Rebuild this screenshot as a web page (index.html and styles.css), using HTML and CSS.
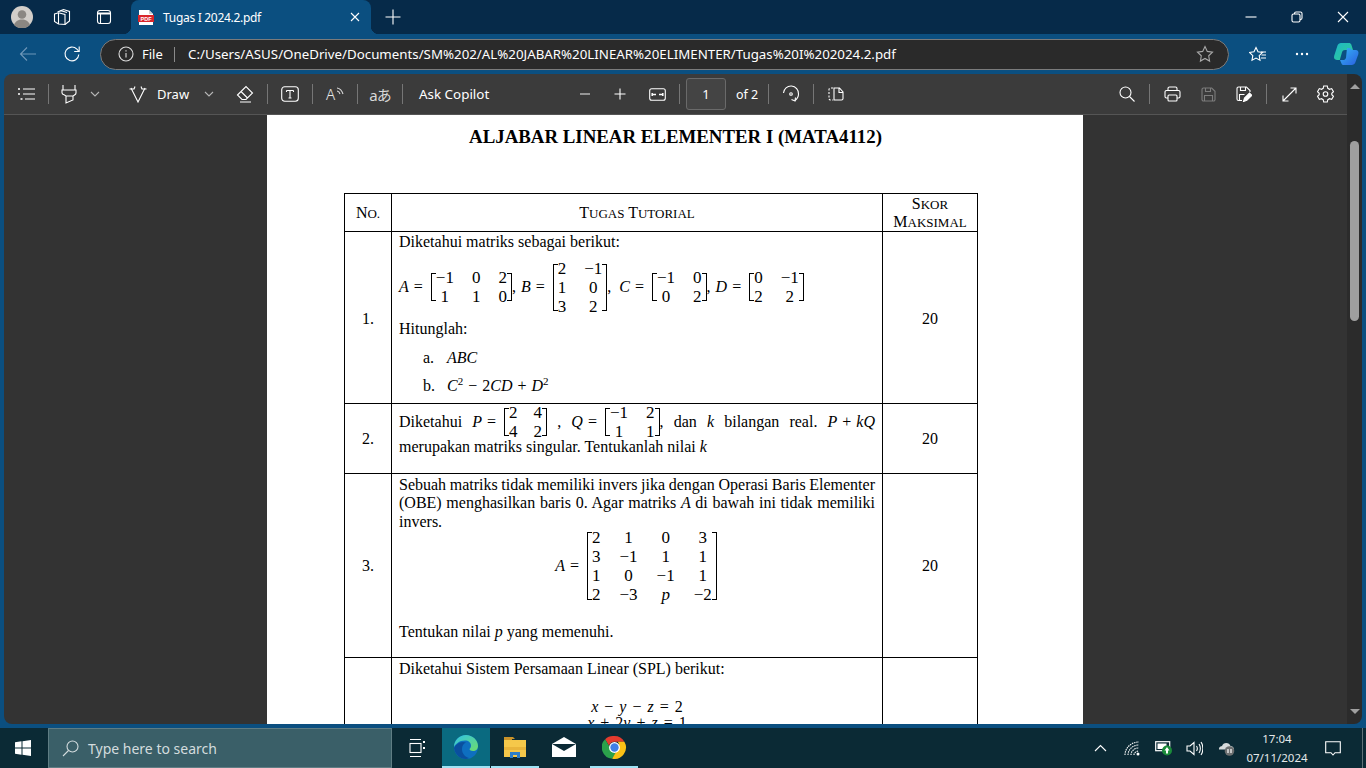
FILE: index.html
```html
<!DOCTYPE html>
<html lang="id">
<head>
  <meta charset="UTF-8" />
  <title>Tugas I 2024.2.pdf</title>
  <link rel="stylesheet" href="styles.css">
</head>
<body>

  <!-- title bar + tabs -->
  <div class="tabstrip">
    <div class="avatar">
      <svg width="22" height="22" viewBox="0 0 22 22"><circle cx="11" cy="11" r="11" fill="#d2cec9"/><circle cx="11" cy="8.500" r="4.300" fill="#8b8782"/><path d="M3 19c1.500-4 4.500-5.500 8-5.500s6.500 1.500 8 5.500a11 11 0 0 1-16 0z" fill="#8b8782"/></svg>
    </div>
    <div class="strip-btn w-workspaces">
      <svg class="ico" width="18" height="18" viewBox="0 0 18 18"><path d="M7.500 2.800 10.500 1.500 16.500 3.500v9.500l-4.500 3.500"/><path d="M4.500 4 8 2.700 14 4.600"/><path d="M1.500 6 5.500 4.800 12 6.500v10l-6.500-.5L1.500 13.500z"/><path d="M5.500 5v11"/></svg>
    </div>
    <div class="strip-btn w-tabactions">
      <svg class="ico" width="16" height="16" viewBox="0 0 16 16"><rect x="1.500" y="1.500" width="13" height="13" rx="2.500"/><path d="M1.500 4.500h13" stroke-width="2"/><path d="M4.500 4.500v10"/></svg>
    </div>
    <div class="tab">
      <svg class="pdf-fav" width="16" height="17" viewBox="0 0 16 17"><path d="M1 1h10l4 4v11H1z" fill="#fff"/><path d="M11 1v4h4z" fill="#cfcfcf"/><rect x="0" y="6" width="16" height="7" fill="#d9252a"/><text x="8" y="11.600" text-anchor="middle" class="pdf-fav-text">PDF</text></svg>
      <span class="tab-title">Tugas I 2024.2.pdf</span>
      <svg class="ico tab-close" width="10" height="10" viewBox="0 0 10 10"><path d="M1 1l8 8M9 1l-8 8"/></svg>
    </div>
    <div class="strip-btn w-newtab">
      <svg class="ico" width="16" height="16" viewBox="0 0 16 16"><path d="M8 .5v15M.5 8h15"/></svg>
    </div>
    <div class="winctl">
      <div class="winbtn"><svg class="ico" width="12" height="12" viewBox="0 0 12 12"><path d="M.5 6h11"/></svg></div>
      <div class="winbtn"><svg class="ico" width="12" height="12" viewBox="0 0 12 12"><rect x="1" y="3" width="8" height="8" rx="1.500"/><path d="M3.500 3V2.500A1.500 1.500 0 0 1 5 1h4.500A1.500 1.500 0 0 1 11 2.500V7a1.500 1.500 0 0 1-1.500 1.500H9"/></svg></div>
      <div class="winbtn"><svg class="ico" width="12" height="12" viewBox="0 0 12 12"><path d="M1 1l10 10M11 1L1 11"/></svg></div>
    </div>
  </div>

  <!-- address bar -->
  <div class="navbar">
    <div class="nav-btn back">
      <svg class="ico" width="18" height="16" viewBox="0 0 18 16"><path d="M17 8H1.500M8 1.500 1.500 8 8 14.500"/></svg>
    </div>
    <div class="nav-btn refresh">
      <svg class="ico" width="18" height="18" viewBox="0 0 18 18"><path d="M15.800 9.500a6.900 6.900 0 1 1-1.900-5.300L16 6.500"/><path d="M16.200 1.500v5h-5"/></svg>
    </div>
    <div class="urlbar">
      <svg class="ico info" width="16" height="16" viewBox="0 0 16 16"><circle cx="8" cy="8" r="7"/><path d="M8 7v4.500M8 4.200v1.200"/></svg>
      <span class="url-file">File</span>
      <span class="url-sep"></span>
      <span class="url-text">C:/Users/ASUS/OneDrive/Documents/SM%202/AL%20JABAR%20LINEAR%20ELIMENTER/Tugas%20I%202024.2.pdf</span>
      <svg class="ico star" width="18" height="18" viewBox="0 0 18 18"><path d="M9 1.500l2.300 4.900 5.200.7-3.800 3.700.9 5.300L9 13.500l-4.600 2.600.9-5.300L1.500 7.100l5.200-.7z"/></svg>
    </div>
    <div class="nav-btn favs">
      <svg class="ico" width="18" height="18" viewBox="0 0 18 18"><path d="M8 1.500l2 4.300 4.500.6-3.300 3.200.8 4.700-4-2.200-4 2.200.8-4.700L1.500 6.400 6 5.800z" transform="translate(-1 1)"/><path d="M12 7h5M12.500 10h4.500M12 13h5"/></svg>
    </div>
    <div class="nav-btn dots">
      <svg width="14" height="4" viewBox="0 0 14 4" fill="#fff"><circle cx="2" cy="2" r="1.200"/><circle cx="7" cy="2" r="1.200"/><circle cx="12" cy="2" r="1.200"/></svg>
    </div>
    <div class="nav-btn copilot">
      <svg width="26" height="24" viewBox="0 0 26 24">
        <defs>
          <linearGradient id="cpa" x1="0" y1="0" x2="1" y2="1"><stop offset="0" stop-color="#1fb5c9"/><stop offset="1" stop-color="#2fcf8f"/></linearGradient>
          <linearGradient id="cpb" x1="0" y1="0" x2="1" y2="1"><stop offset="0" stop-color="#35b6f5"/><stop offset="1" stop-color="#2a5fe0"/></linearGradient>
        </defs>
        <path d="M8 1h8c1 0 2 .6 2.300 1.600L20 8h-8c-1.500 0-2.500.8-3 2.300L6.800 18H4C1.500 18 .5 16 1.200 13.800L4.500 3.500C5 2 6.400 1 8 1z" fill="url(#cpa)"/>
        <path d="M14 6h3l2 2h3.500c2.500 0 3.500 2 2.800 4.200l-3 8.300c-.5 1.500-2 2.500-3.500 2.500h-8c-1 0-2-.6-2.300-1.600L7 18l3 0c1.500 0 2.600-.9 3-2.300z" fill="url(#cpb)"/>
      </svg>
    </div>
  </div>

  <div class="content">
    <div class="viewer-col">

      <!-- pdf toolbar -->
      <div class="pdfbar">
        <div class="tb w36 ml5"><svg class="ico" width="18" height="14" viewBox="0 0 18 14"><path d="M5 2h12M5 7h12M7 12h10"/><path d="M1 1.200v1.600M1 6.200v1.600M3.500 11.200v1.600" stroke-width="2"/></svg></div>
        <span class="tsep ml3"></span>
        <div class="tb w40"><svg class="ico" width="16" height="20" viewBox="0 0 16 20"><path d="M2 1v5h12V1M1 6h14v3c0 1-.5 1.500-1.500 2L12 12v4l-7 3v-7l-1.500-1C2 10.500 1 10 1 9zM5 12h7"/></svg></div>
        <div class="tb w12"><svg class="ico dim" width="10" height="6" viewBox="0 0 10 6"><path d="M1 1l4 4 4-4"/></svg></div>
        <div class="tb w36 ml19"><svg class="ico" width="18" height="18" viewBox="0 0 18 18"><path d="M2 3l7 14 7-14"/><path d="M.5 4h5M12.500 4h5M5 4l1-2.500M13 4l-1-2.500"/></svg></div>
        <span class="tlabel ml1 w-draw">Draw</span>
        <div class="tb w12 ml14"><svg class="ico dim" width="10" height="6" viewBox="0 0 10 6"><path d="M1 1l4 4 4-4"/></svg></div>
        <div class="tb w36 ml12"><svg class="ico" width="18" height="18" viewBox="0 0 18 18"><path d="M1.500 10 10 1.500l6.500 6.500-6.500 6.500H6zM5 6.500l6.500 6.500M4 17h11"/></svg></div>
        <span class="tsep ml4"></span>
        <div class="tb w44"><svg class="ico" width="18" height="16" viewBox="0 0 18 16"><rect x=".7" y=".7" width="16.600" height="14.600" rx="3"/><path d="M5.500 4.500h7M9 4.500v7.500M7.500 12h3M5.500 4.500v1.500M12.500 4.500v1.500"/></svg></div>
        <span class="tsep"></span>
        <div class="tb w44"><span class="aloud">A</span><svg class="ico waves" width="8" height="9" viewBox="0 0 8 9"><path d="M1 1c3 .5 5 2.500 6 6M1 4c1.500.3 2.500 1.200 3 3"/></svg></div>
        <span class="tsep"></span>
        <div class="tb w44"><span class="translate">aあ</span></div>
        <span class="tsep"></span>
        <span class="tlabel ml16 w-ask">Ask Copilot</span>
        <div class="tb w36 ml77"><svg class="ico dim" width="12" height="12" viewBox="0 0 12 12"><path d="M1 6h10" stroke-width="1.500"/></svg></div>
        <div class="tb w34"><svg class="ico" width="12" height="12" viewBox="0 0 12 12"><path d="M6 .5v11M.5 6h11"/></svg></div>
        <div class="tb w40"><svg class="ico" width="17" height="13" viewBox="0 0 17 13"><rect x=".7" y=".7" width="15.600" height="11.600" rx="2"/><path d="M3 6.500h4M10 6.500h4" stroke-width="1.300"/><path d="M3.200 5v3M13.800 5v3" stroke-width="1.500"/></svg></div>
        <span class="tsep ml2"></span>
        <div class="pagebox">1</div>
        <span class="tlabel of">of 2</span>
        <span class="tsep ml11"></span>
        <div class="tb w44"><svg class="ico" width="18" height="18" viewBox="0 0 18 18"><path d="M1.500 8a7.500 7.500 0 0 1 15 1c0 3-1.500 5-3.500 6.500"/><path d="M9.500 14.500l3.500 1.500.5 -3.500"/><circle cx="9" cy="9" r="1.300"/></svg></div>
        <span class="tsep"></span>
        <div class="tb w44"><svg class="ico" width="16" height="14" viewBox="0 0 16 14"><path d="M5 1H2.500A1.500 1.500 0 0 0 1 2.500v9A1.500 1.500 0 0 0 2.500 13H5" stroke-dasharray="2 1.500"/><path d="M6 1h5.500L15 5v6.500a1.500 1.500 0 0 1-1.500 1.500H6zM11 1v4.500h4"/></svg></div>

        <div class="tb w44 push"><svg class="ico" width="16" height="16" viewBox="0 0 16 16"><circle cx="6.500" cy="6.500" r="5.500"/><path d="M10.500 10.500l5 5"/></svg></div>
        <span class="tsep mr4"></span>
        <div class="tb w36"><svg class="ico" width="17" height="16" viewBox="0 0 17 16"><path d="M4 4.500V2.500A1.500 1.500 0 0 1 5.500 1h6A1.500 1.500 0 0 1 13 2.500v2"/><path d="M4 12H2.500A1.500 1.500 0 0 1 1 10.500V6a1.500 1.500 0 0 1 1.500-1.500h12A1.500 1.500 0 0 1 16 6v4.500a1.500 1.500 0 0 1-1.500 1.500H13"/><rect x="4" y="9" width="9" height="6" rx="1"/></svg></div>
        <div class="tb w36"><svg class="ico off" width="15" height="15" viewBox="0 0 15 15"><path d="M1 2.500A1.500 1.500 0 0 1 2.500 1h8.200L14 4.300v8.200a1.500 1.500 0 0 1-1.500 1.500h-10A1.500 1.500 0 0 1 1 12.500z"/><path d="M4.500 1v3.500h5V1M3.500 14V8.500h8V14"/></svg></div>
        <div class="tb w36"><svg class="ico" width="16" height="16" viewBox="0 0 16 16"><path d="M6 14.500H2.500A1.500 1.500 0 0 1 1 13V2.500A1.500 1.500 0 0 1 2.500 1h8L14 4.500V6"/><path d="M4.500 1v3.500h5V1M3.500 14V8.500h5"/><path d="M7.500 15.500l1-3.500 5-5 2.300 2.300-5 5z" fill="currentColor"/></svg></div>
        <span class="tsep ml4"></span>
        <div class="tb w44"><svg class="ico" width="15" height="15" viewBox="0 0 15 15"><path d="M1 14 14 1M8.500 1H14v5.500M1 8.500V14h5.500"/></svg></div>
        <div class="tb w28 mr8"><svg class="ico" width="17" height="18" viewBox="0 0 17 18"><path d="M6.700 1h3.600l.5 2.300 1.700 1 2.200-.7 1.800 3.100-1.700 1.600v1.400l1.700 1.600-1.800 3.100-2.200-.7-1.700 1-.5 2.300H6.700l-.5-2.300-1.700-1-2.200.7L.5 11.300l1.700-1.600V8.300L.5 6.700l1.800-3.100 2.200.7 1.700-1z"/><circle cx="8.500" cy="9" r="2.300"/></svg></div>
      </div>

      <!-- pdf page -->
      <div class="viewer">
        <div class="page">
          <h1 class="doc-title">ALJABAR LINEAR ELEMENTER I (MATA4112)</h1>
          <table class="tugas">
            <colgroup><col class="col-no"><col class="col-main"><col class="col-skor"></colgroup>
            <tr class="row-head">
              <th>N<span class="sc">o.</span></th>
              <th>T<span class="sc">ugas</span> T<span class="sc">utorial</span></th>
              <th>S<span class="sc">kor</span><br>M<span class="sc">aksimal</span></th>
            </tr>

            <tr class="row-1">
              <td class="no">1.</td>
              <td class="soal">
                <div>Diketahui matriks sebagai berikut:</div>
                <div class="eq-line">
                  <var>A</var><span class="eq">=</span>
                  <span class="mx"><span class="cells c3"><span>−1</span><span>0</span><span>2</span><span>1</span><span>1</span><span>0</span></span></span>
                  <span class="comma">,</span>
                  <var>B</var><span class="eq">=</span>
                  <span class="mx"><span class="cells c2"><span>2</span><span>−1</span><span>1</span><span>0</span><span>3</span><span>2</span></span></span>
                  <span class="comma wide">,</span>
                  <var>C</var><span class="eq">=</span>
                  <span class="mx"><span class="cells c2"><span>−1</span><span>0</span><span>0</span><span>2</span></span></span>
                  <span class="comma">,</span>
                  <var>D</var><span class="eq">=</span>
                  <span class="mx"><span class="cells c2"><span>0</span><span>−1</span><span>2</span><span>2</span></span></span>
                </div>
                <div class="hitung">Hitunglah:</div>
                <div class="sub sub-a"><span class="sub-mark">a.</span><var>ABC</var></div>
                <div class="sub sub-b"><span class="sub-mark">b.</span><span><var>C</var><sup>2</sup><span class="op">−</span>2<var>CD</var><span class="op">+</span><var>D</var><sup>2</sup></span></div>
              </td>
              <td class="skor">20</td>
            </tr>

            <tr class="row-2">
              <td class="no">2.</td>
              <td class="soal">
                <div class="just">Diketahui <span class="inl"><var>P</var><span class="eq">=</span><span class="mx"><span class="cells c2 g16"><span>2</span><span>4</span><span>4</span><span>2</span></span></span></span> , <span class="inl"><var>Q</var><span class="eq">=</span><span class="mx"><span class="cells c2"><span>−1</span><span>2</span><span>1</span><span>1</span></span></span><span>,</span></span> dan <var>k</var> bilangan real. <span class="inl"><var>P</var><span class="op">+</span><var>kQ</var></span> merupakan matriks singular. Tentukanlah nilai <var>k</var></div>
              </td>
              <td class="skor">20</td>
            </tr>

            <tr class="row-3">
              <td class="no">3.</td>
              <td class="soal">
                <div class="just tight">Sebuah matriks tidak memiliki invers jika dengan Operasi Baris Elementer (OBE) menghasilkan baris 0. Agar matriks <var>A</var> di bawah ini tidak memiliki invers.</div>
                <div class="eq-center">
                  <var>A</var><span class="eq">=</span>
                  <span class="mx"><span class="cells c4 tall"><span>2</span><span>1</span><span>0</span><span>3</span><span>3</span><span>−1</span><span>1</span><span>1</span><span>1</span><span>0</span><span>−1</span><span>1</span><span>2</span><span>−3</span><span><var>p</var></span><span>−2</span></span></span>
                </div>
                <div class="tentukan">Tentukan nilai <var>p</var> yang memenuhi.</div>
              </td>
              <td class="skor">20</td>
            </tr>

            <tr class="row-4">
              <td class="no"></td>
              <td class="soal">
                <div>Diketahui Sistem Persamaan Linear (SPL) berikut:</div>
                <div class="spl">
                  <div><var>x</var><span class="op">−</span><var>y</var><span class="op">−</span><var>z</var><span class="op">=</span>2</div>
                  <div><var>x</var><span class="op">+</span>2<var>y</var><span class="op">+</span><var>z</var><span class="op">=</span>1</div>
                </div>
              </td>
              <td class="skor"></td>
            </tr>
          </table>
        </div>
      </div>
    </div>

    <div class="vscroll">
      <span class="arrow-up"></span>
      <span class="thumb"></span>
      <span class="arrow-down"></span>
    </div>
  </div>

  <!-- windows taskbar -->
  <div class="taskbar">
    <div class="start">
      <svg width="16" height="16" viewBox="0 0 16 16" fill="#fff"><path d="M0 2.300 6.500 1.300v6.200H0zM7.500 1.200 16 0v7.500H7.500zM0 8.500h6.500v6.200L0 13.700zM7.500 8.500H16V16l-8.500-1.200z"/></svg>
    </div>
    <div class="search">
      <svg class="ico" width="17" height="17" viewBox="0 0 17 17"><circle cx="10.500" cy="6.500" r="5.500"/><path d="M6.500 10.500 1 16"/></svg>
      <span>Type here to search</span>
    </div>
    <div class="task taskview">
      <svg class="ico" width="16" height="20" viewBox="0 0 16 20"><path d="M1 1.500h11M1 18.500h11"/><rect x="1" y="5.500" width="11" height="9"/><path d="M15 3v2M15 9v2" stroke-width="2"/></svg>
    </div>
    <div class="task app active">
      <svg width="26" height="26" viewBox="0 0 26 26">
        <defs>
          <linearGradient id="edgeg" x1="0" y1="0" x2="1" y2="1"><stop offset="0" stop-color="#2fc3e8"/><stop offset="1" stop-color="#6fdc6a"/></linearGradient>
        </defs>
        <circle cx="13" cy="13" r="12" fill="#0e6fc0"/>
        <path d="M1 13C1 6 6.500 1 13 1c6.500 0 12 5 12 11 0 3-2 5-5 5-2 0-3.500-.8-3.500-2 1-1 1.500-2 1.500-3.200C18 8.500 15.500 6.500 12 6.500 6 6.500 2.500 10 1 13z" fill="url(#edgeg)"/>
        <path d="M9 15c0 4.500 3 8 7 9-1 .6-2 1-3 1-6 0-11-4.500-12-11 1.500-3 5-6 9-6 1 0 2 .2 3 .6C10.500 9.800 9 12 9 15z" fill="#0a4f9e"/>
      </svg>
    </div>
    <div class="task app open">
      <svg width="24" height="24" viewBox="0 0 24 24"><path d="M1 2h9l2 2h-3v3H1z" fill="#c9932a"/><rect x="1" y="5" width="22" height="17" fill="#f5c84a"/><rect x="1" y="12" width="22" height="3" fill="#e9b53b"/><path d="M7 23v-6h10v6h-3v-3h-4v3z" fill="#2c7fc9"/></svg>
    </div>
    <div class="task app mail">
      <svg width="24" height="20" viewBox="0 0 24 20"><path d="M0 7 12 0l12 7v13H0z" fill="#fff"/><path d="M0 7h24L12 14z" fill="#0b2a35"/><path d="M0 8l12 7 12-7v1L12 16 0 9z" fill="#fff"/></svg>
    </div>
    <div class="task app open">
      <svg width="25" height="25" viewBox="0 0 48 48">
        <path d="M24 2a22 22 0 0 1 19 11H24a11 11 0 0 0-10.500 7.500L6 8A22 22 0 0 1 24 2z" fill="#e33b2e"/>
        <path d="M6 8l9.500 16.500A11 11 0 0 0 27 34.500L19.500 45.500A22 22 0 0 1 6 8z" fill="#2ba14b"/>
        <path d="M43 13a22 22 0 0 1-23.500 32.500L29 29a11 11 0 0 0 1-16z" fill="#fbc116"/>
        <circle cx="24" cy="24" r="10.500" fill="#fff"/>
        <circle cx="24" cy="24" r="8" fill="#3f7fe6"/>
      </svg>
    </div>

    <div class="tray">
      <div class="tray-item w-chev"><svg class="ico" width="13" height="8" viewBox="0 0 13 8"><path d="M1 7l5.500-5.500L12 7"/></svg></div>
      <div class="tray-item w-wifi"><svg class="ico" width="16" height="15" viewBox="0 0 16 15"><path d="M1 14C1 7 7 1 15 1M4 14c0-5 4.500-10 11-10M7 14c0-3.500 3-7 8-7M10 14c0-2 2-4 5-4" stroke-dasharray="1.500 .8"/><circle cx="14" cy="13" r="1.500" fill="#fff" stroke="none"/></svg></div>
      <div class="tray-item w-batt"><svg width="18" height="16" viewBox="0 0 18 16"><rect x=".7" y="1.700" width="14" height="9" fill="none" stroke="#fff" stroke-width="1.200"/><rect x="2.500" y="3.500" width="9" height="5.500" fill="#fff"/><circle cx="12" cy="10.500" r="5" fill="#1b8b3a"/><path d="M12 7l2.500 3.500H13v3h-2v-3H9.500z" fill="#fff"/></svg></div>
      <div class="tray-item w-vol"><svg class="ico" width="17" height="15" viewBox="0 0 17 15"><path d="M1 5v5h3l4 3.500V1.500L4 5zM10.500 5c1 1.500 1 3.500 0 5M13 3c1.800 2.500 1.800 6.500 0 9M15 1c2.500 3.500 2.500 9.500 0 13"/></svg></div>
      <div class="tray-item w-cloud"><svg width="17" height="15" viewBox="0 0 17 15"><path d="M1 9a3.500 3.500 0 0 1 3-4 4.500 4.500 0 0 1 8.500 0c2 .2 3.500 1.500 3.500 3.500H1z" fill="#d6dadb"/><circle cx="11.500" cy="10" r="4.800" fill="#6c6f70"/><path d="M10 8v4M13 8v4" stroke="#fff" stroke-width="1.200"/></svg></div>
      <div class="clock"><span>17:04</span><span>07/11/2024</span></div>
      <div class="tray-item w-notif"><svg class="ico" width="16" height="15" viewBox="0 0 16 15"><path d="M.7.700h14.600v11H10l-2 2.300-2-2.300H.7z"/></svg></div>
      <span class="show-desktop"></span>
    </div>
  </div>

</body>
</html>
```

FILE: styles.css
```css
html, body {
  margin: 0;
  height: 100%;
  overflow: hidden;
}
body {
  display: flex;
  flex-direction: column;
  height: 768px;
  background: #0b4f80;
  font-family: "Noto Sans", "Open Sans", sans-serif;
  color: #fff;
}
.ico {
  fill: none;
  stroke: currentColor;
  stroke-width: 1.100;
  display: block;
}
.ico.dim { color: #b5b5b5; }
.ico.off { color: #7d7d7d; }

/* tabs */
.tabstrip {
  height: 34px;
  flex: none;
  display: flex;
  align-items: center;
  background: #062a49;
}
.avatar { width: 22px; height: 22px; margin-left: 11px; }
.strip-btn { display: flex; align-items: center; justify-content: center; }
.w-workspaces { width: 18px; margin-left: 20px; }
.w-tabactions { width: 16px; margin-left: 25px; }
.tab {
  position: relative;
  width: 240px;
  height: 34px;
  margin-left: 19px;
  display: flex;
  align-items: center;
  background: #0b4f80;
  border-radius: 8px 8px 0 0;
}
.tab::before, .tab::after {
  content: "";
  position: absolute;
  bottom: 0;
  width: 8px;
  height: 8px;
}
.tab::before { left: -8px; background: radial-gradient(circle at 0 0, transparent 8px, #0b4f80 8.500px); }
.tab::after { right: -8px; background: radial-gradient(circle at 100% 0, transparent 8px, #0b4f80 8.500px); }
.pdf-fav { margin-left: 7px; }
.pdf-fav-text { font: bold 5.500px "Liberation Sans", sans-serif; fill: #fff; }
.tab-title { margin-left: 9px; font-size: 12px; letter-spacing: -0.3px; flex: 1; }
.tab-close { margin-right: 11px; }
.w-newtab { margin-left: 14px; width: 16px; }
.winctl { margin-left: auto; display: flex; }
.winbtn { width: 46px; height: 34px; display: flex; align-items: center; justify-content: center; }

/* address bar */
.navbar {
  height: 40px;
  flex: none;
  display: flex;
  align-items: center;
  background: #0b4f80;
}
.nav-btn { display: flex; align-items: center; justify-content: center; }
.back { width: 18px; margin-left: 19px; color: #6f97b8; }
.refresh { width: 18px; margin-left: 26px; }
.urlbar {
  width: 1129px;
  height: 31px;
  margin-left: 19px;
  box-sizing: border-box;
  display: flex;
  align-items: center;
  background: #2a2a2a;
  border: 1px solid #7b7b7b;
  border-radius: 16px;
  font-size: 13px;
}
.info { margin-left: 17px; color: #dcdcdc; }
.url-file { margin-left: 8px; width: 23px; }
.url-sep { width: 1px; height: 15px; background: #8a8a8a; margin-left: 9px; }
.url-text { margin-left: 13px; flex: 1; white-space: nowrap; font-size: 13.300px; }
.star { margin-right: 14px; color: #a8a8a8; }
.favs { width: 18px; margin-left: 20px; }
.dots { width: 20px; margin-left: 25px; }
.copilot { width: 26px; margin-left: 21px; }

/* main area */
.content {
  flex: none;
  height: 650px;
  margin: 0 4px 4px;
  display: flex;
  border-radius: 8px;
  overflow: hidden;
}
.viewer-col {
  flex: 1;
  min-width: 0;
  display: flex;
  flex-direction: column;
}
.pdfbar {
  height: 40px;
  flex: none;
  box-sizing: border-box;
  display: flex;
  align-items: center;
  background: #3b3b3b;
  font-size: 13px;
}
.tb { display: flex; align-items: center; justify-content: center; height: 40px; flex: none; }
.w12 { width: 12px; }
.w28 { width: 28px; }
.w34 { width: 34px; }
.w36 { width: 36px; }
.w40 { width: 40px; }
.w44 { width: 44px; }
.ml1 { margin-left: 1px; }
.ml2 { margin-left: 2px; }
.ml3 { margin-left: 3px; }
.ml4 { margin-left: 4px; }
.ml5 { margin-left: 5px; }
.ml11 { margin-left: 11px; }
.ml12 { margin-left: 12px; }
.ml14 { margin-left: 14px; }
.ml16 { margin-left: 16px; }
.ml19 { margin-left: 19px; }
.ml77 { margin-left: 77px; }
.mr4 { margin-right: 4px; }
.mr8 { margin-right: 8px; }
.push { margin-left: auto; }
.tsep { width: 1px; height: 20px; background: #767676; flex: none; }
.tlabel { flex: none; white-space: nowrap; }
.w-draw { width: 32px; }
.w-ask { width: 71px; font-size: 13.400px; }
.aloud { font-size: 15px; line-height: 1; font-weight: 300; color: #e8e8e8; }
.waves { margin: -6px 0 0 1px; color: #d8d8d8; }
.translate { font-family: "Noto Sans", "Noto Sans CJK JP", sans-serif; font-size: 15px; color: #d8d8d8; letter-spacing: -1px; }
.pagebox {
  width: 40px;
  height: 32px;
  margin-left: 6px;
  box-sizing: border-box;
  border: 1px solid #6a6a6a;
  border-radius: 3px;
  background: #444;
  display: flex;
  align-items: center;
  justify-content: center;
  flex: none;
}
.of { margin-left: 10px; width: 21px; font-size: 12.500px; }

.viewer {
  flex: 1;
  min-height: 0;
  display: flex;
  justify-content: center;
  background: #333;
  border-top: 1px solid #555;
  overflow: hidden;
}

/* pdf page */
.page {
  width: 816px;
  flex: none;
  margin-right: 1px;
  background: #fff;
  color: #000;
  padding: 11px 0 0 77px;
  box-sizing: border-box;
  font-family: "Liberation Serif", serif;
  font-size: 16px;
  line-height: 18.400px;
}
.doc-title {
  margin: 0 0 45px 0;
  width: 663px;
  text-align: center;
  font-size: 18.850px;
  line-height: 22px;
}
.tugas {
  border-collapse: collapse;
  table-layout: fixed;
  width: 634px;
}
.col-no { width: 47px; }
.col-main { width: 491px; }
.col-skor { width: 95px; }
.tugas th, .tugas td { border: 1px solid #000; padding: 0; box-sizing: border-box; }
.tugas th {
  font-weight: normal;
  height: 38px;
  line-height: 18px;
  padding-top: 1px;
}
.sc { font-size: 13px; line-height: 1; text-transform: uppercase; }
.no, .skor { text-align: center; vertical-align: middle; padding-top: 2px !important; }
.soal { vertical-align: top; padding: 0 7px !important; }
.row-1 td { height: 172px; }
.row-1 .no, .row-1 .skor { padding-top: 3px !important; }
.row-2 td { height: 70px; }
.row-3 td { height: 184px; }
.row-4 td { height: 220px; }
.row-1 .soal { padding-top: 1px !important; }
.row-2 .soal { padding-top: 4px !important; }
.row-3 .soal { padding-top: 2px !important; }
.row-4 .soal { padding-top: 2px !important; }

.just { text-align: justify; }
.tight { word-spacing: -1px; }
.eq-line { display: flex; align-items: center; height: 50px; margin-top: 11px; }
.eq { margin: 0 8px 0 5px; }
.comma { margin-right: 5px; }
.comma.wide { margin-right: 8px; }
.op { margin: 0 5px; }
.inl { display: inline-flex; align-items: center; vertical-align: middle; white-space: nowrap; margin-bottom: 2px; }
sup { font-size: 11px; line-height: 0; }

/* matrix: brackets come from the pseudo elements, numbers stick out of them a bit */
.mx { display: inline-flex; align-items: stretch; }
.mx::before, .mx::after {
  content: "";
  width: 4px;
  border: solid #000;
  flex: none;
}
.mx::before { border-width: 1px 0 1px 1.500px; }
.mx::after { border-width: 1px 1.500px 1px 0; }
.cells {
  display: inline-grid;
  column-gap: 18px;
  grid-auto-rows: 19px;
  margin: -5px 0;
  text-align: center;
  font-size: 17px;
  line-height: 19px;
}
.tall { margin: -4px 0; column-gap: 19px; }
.c2 { grid-template-columns: repeat(2, auto); }
.c3 { grid-template-columns: repeat(3, auto); }
.c4 { grid-template-columns: repeat(4, auto); }
.g16 { column-gap: 16px; }

.hitung { margin-top: 8px; }
.sub { display: flex; }
.sub-a { margin-top: 10px; }
.sub-b { margin-top: 10px; }
.sub-mark { width: 24px; margin-left: 24px; }
.eq-center { display: flex; justify-content: center; align-items: center; margin-top: 1px; padding-right: 2px; }
.tentukan { margin-top: 23px; }
.spl { margin-top: 21px; text-align: center; line-height: 16px; }
.spl .op { margin: 0 6px; }

/* scrollbar */
.vscroll {
  width: 15px;
  flex: none;
  box-sizing: border-box;
  padding: 10px 0;
  background: #2b2b2b;
  display: flex;
  flex-direction: column;
  align-items: center;
}
.arrow-up, .arrow-down {
  width: 0;
  height: 0;
  border-left: 5px solid transparent;
  border-right: 5px solid transparent;
}
.arrow-up { border-bottom: 5px solid #a0a0a0; }
.arrow-down { border-top: 5px solid #a0a0a0; margin-top: auto; }
.thumb {
  width: 9px;
  height: 180px;
  margin-top: 52px;
  background: #9f9f9f;
  border-radius: 5px;
}

/* taskbar */
.taskbar {
  height: 40px;
  flex: none;
  display: flex;
  align-items: stretch;
  background: #0b2a35;
  font-family: "Noto Sans", "Open Sans", sans-serif;
}
.start { width: 48px; display: flex; align-items: center; justify-content: center; padding-right: 3px; box-sizing: border-box; }
.search {
  width: 344px;
  box-sizing: border-box;
  background: #3a5f68;
  border: 1px solid #5f7d84;
  display: flex;
  align-items: center;
  padding-left: 13px;
  font-size: 14px;
  color: #d3dcde;
}
.search span { margin-left: 9px; }
.task { display: flex; align-items: center; justify-content: center; box-sizing: border-box; }
.taskview { width: 50px; }
.app { width: 48px; margin-right: 1px; border-bottom: 2px solid transparent; }
.app.active { background: #0a6a80; border-bottom-color: #9fe3f5; }
.app.open { border-bottom-color: #9fe3f5; }
.mail { margin-right: 2px; }
.tray { margin-left: auto; display: flex; align-items: center; }
.tray-item { display: flex; align-items: center; justify-content: center; }
.w-chev { width: 13px; }
.w-wifi { width: 16px; margin-left: 17px; }
.w-batt { width: 18px; margin-left: 15px; }
.w-vol { width: 17px; margin-left: 13px; }
.w-cloud { width: 17px; margin-left: 15px; }
.clock {
  width: 80px;
  margin-left: 2px;
  display: flex;
  flex-direction: column;
  align-items: center;
  font-size: 11.500px;
  line-height: 19px;
  color: #e4e8e9;
}
.w-notif { width: 16px; margin-left: 8px; }
.show-desktop { width: 1px; height: 40px; background: #5f7278; margin-left: 21px; margin-right: 3px; }
```
